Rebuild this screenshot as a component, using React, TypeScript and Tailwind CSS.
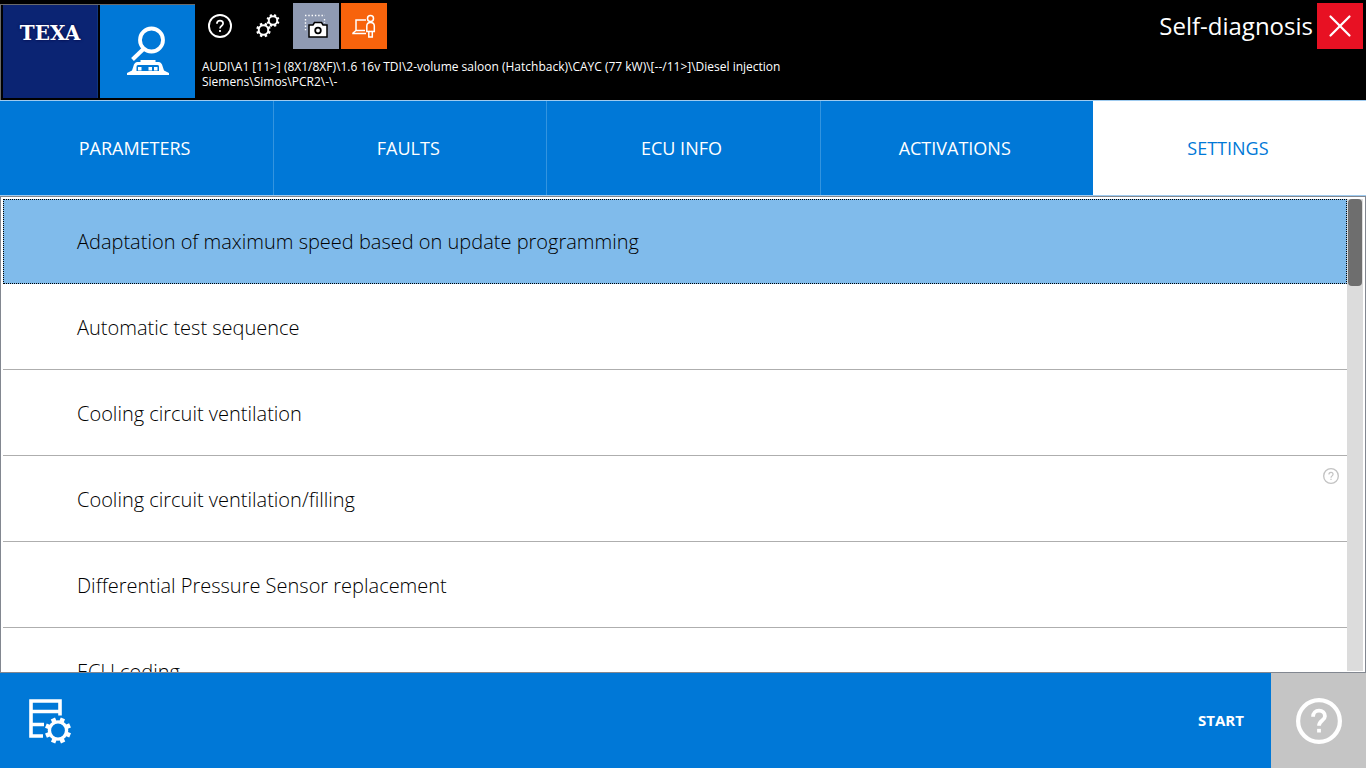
import { useState } from 'react';
import { X } from 'lucide-react';
import clsx from 'clsx';

const TABS = ['PARAMETERS', 'FAULTS', 'ECU INFO', 'ACTIVATIONS', 'SETTINGS'];

interface SettingItem {
  name: string;
  hasHelp?: boolean;
}

const SETTINGS: SettingItem[] = [
  { name: 'Adaptation of maximum speed based on update programming' },
  { name: 'Automatic test sequence' },
  { name: 'Cooling circuit ventilation' },
  { name: 'Cooling circuit ventilation/filling', hasHelp: true },
  { name: 'Differential Pressure Sensor replacement' },
  { name: 'ECU coding' },
];

const TEETH = [0, 45, 90, 135, 180, 225, 270, 315];

interface GearProps {
  cx: number;
  cy: number;
  r: number;
  stroke: number;
  tooth: number;
}

function Gear({ cx, cy, r, stroke, tooth }: GearProps) {
  return (
    <g>
      <circle cx={cx} cy={cy} r={r} fill="none" stroke="currentColor" strokeWidth={stroke} />
      {TEETH.map((angle) => (
        <rect
          key={angle}
          x={cx - tooth / 2}
          y={cy - r - stroke / 2 - tooth * 0.6}
          width={tooth}
          height={tooth}
          fill="currentColor"
          transform={`rotate(${angle + 22} ${cx} ${cy})`}
        />
      ))}
    </g>
  );
}

function HelpIcon({ className, stroke = 2 }: { className: string; stroke?: number }) {
  return (
    <svg viewBox="0 0 24 24" className={className} fill="none" stroke="currentColor" aria-hidden="true">
      <circle cx="12" cy="12" r={12 - stroke / 2} strokeWidth={stroke} />
      <path d="M8.9 9.8c0-2 1.3-3.2 3.1-3.2s3.1 1.2 3.1 2.9c0 2.3-3.1 2.3-3.1 5" strokeWidth={stroke * 0.9} />
      <path d="M12 16.1v1.900" strokeWidth={stroke * 0.9} />
    </svg>
  );
}

function GearsIcon() {
  return (
    <svg viewBox="0 0 26 26" className="size-[26px]" aria-hidden="true">
      <Gear cx={8.5} cy={17} r={4.8} stroke={2} tooth={2.5} />
      <Gear cx={18} cy={7.5} r={4.2} stroke={1.9} tooth={2.2} />
    </svg>
  );
}

function ScreenshotIcon() {
  return (
    <svg viewBox="0 0 46 46" className="size-[46px]" fill="none" aria-hidden="true">
      <path d="M12 12.5h20M12.5 16v13M31.5 16v4" stroke="#fff" strokeWidth="1.4" strokeDasharray="1.4 1.9" />
      <path d="M16 22h4l1.5-2.5h7L30 22h4v12H16z" fill="#fff" stroke="#000" strokeWidth="1.5" />
      <circle cx="25" cy="27.5" r="2.8" stroke="#000" strokeWidth="1.8" />
    </svg>
  );
}

function OperatorIcon() {
  return (
    <svg viewBox="0 0 46 46" className="size-[46px]" fill="none" stroke="#fff" strokeWidth="1.5" aria-hidden="true">
      <path d="M25 17H15v10.5h9M15 27.5L12 30v.6h13" />
      <circle cx="29.5" cy="15.5" r="3" />
      <path d="M29.5 19.5c-2.7 0-3.7 1.3-3.7 3.5v5.5h2V34h3.5v-5.5h2V23c0-2.2-1.1-3.5-3.8-3.5z" />
      <path d="M27.8 28.5h3.5" />
    </svg>
  );
}

function DiagnosisIcon() {
  return (
    <svg viewBox="0 0 95 93" className="h-[93px] w-full" aria-hidden="true">
      <circle cx="51.5" cy="35" r="11.5" fill="none" stroke="#fff" strokeWidth="3.8" />
      <path d="M44 43.5L32.5 54.5" stroke="#fff" strokeWidth="4" />
      <path
        d="M40.500 55h15v2h3.500c2 .5 3 2 3.500 4l1.500 4.500 5 2.500V70H27v-2l5-2.500 1.500-4.500c.5-2 1.500-3.500 3.500-4h3.500z"
        fill="#fff"
      />
      <path d="M38 60h19.5c1.2 0 1.5.8 1.5 2v4H36.5v-4c0-1.2.5-2 1.5-2z" fill="#0078d7" />
      <path d="M38 62h3.500v3.500H38zM48.500 62H52v3.500h-3.500zM54 62h3.500v3.500H54z" fill="#fff" />
    </svg>
  );
}

function EcuSettingsIcon() {
  return (
    <svg viewBox="0 0 46 48" className="h-12 w-[46px]" fill="none" aria-hidden="true">
      <path d="M33 18.5V4H4v35h12M4 14.5h29M4 27.5h13" stroke="#fff" strokeWidth="3.6" />
      <Gear cx={31} cy={33.5} r={8.6} stroke={3.4} tooth={4.6} />
    </svg>
  );
}

export default function App() {
  const [activeTab, setActiveTab] = useState('SETTINGS');
  const [selected, setSelected] = useState(0);

  return (
    <div className="flex h-screen flex-col overflow-hidden bg-white font-['Open_Sans','Noto_Sans',sans-serif] text-black">
      <header className="flex h-[100px] shrink-0 bg-black pt-1 text-white">
        <div className="flex gap-0.5 border-l border-t border-[#6a6a6a] pl-0.5">
          <div className="flex h-[93px] w-[95px] justify-center border-r border-[#10367f] bg-[#0b2473] pt-4 font-['DejaVu_Serif',serif] text-xl font-bold leading-6 text-shadow-[0_0_3px_#000040]">
            TEXA
          </div>
          <button type="button" aria-label="Vehicle diagnosis" className="h-[93px] w-[95px] bg-[#0078d7]">
            <DiagnosisIcon />
          </button>
        </div>

        <div className="-mt-px flex min-w-0 flex-1 flex-col">
          <div className="flex h-[46px] items-center">
            <div className="flex gap-0.5 pl-0.5">
              <button type="button" aria-label="Help" className="flex size-[46px] items-center justify-center">
                <HelpIcon className="size-6" stroke={1.9} />
              </button>
              <button type="button" aria-label="Options" className="flex size-[46px] items-center justify-center">
                <GearsIcon />
              </button>
              <button type="button" aria-label="Screenshot" className="size-[46px] bg-[#8f9ab2]">
                <ScreenshotIcon />
              </button>
              <button type="button" aria-label="Remote assistance" className="size-[46px] bg-[#f7630c]">
                <OperatorIcon />
              </button>
            </div>
            <h1 className="ml-auto pr-1 text-2xl">Self-diagnosis</h1>
            <button type="button" aria-label="Close" className="mr-[3px] flex size-[46px] items-center justify-center bg-[#e81123]">
              <X className="size-[38px]" strokeWidth={1.4} />
            </button>
          </div>
          <p className="max-w-[600px] pl-[7px] pt-2.5 text-xs leading-[15px]">
            AUDI\A1 [11&gt;] (8X1/8XF)\1.6 16v TDI\2-volume saloon (Hatchback)\CAYC (77 kW)\[--/11&gt;]\Diesel injection
            Siemens\Simos\PCR2\-\-
          </p>
        </div>
      </header>

      <nav className="grid h-24 shrink-0 grid-cols-5 border-y border-[#9fcbef]">
        {TABS.map((tab) => (
          <button
            key={tab}
            type="button"
            onClick={() => setActiveTab(tab)}
            className={clsx(
              'border-l pr-1 text-lg first:border-l-0',
              tab === activeTab ? 'border-white bg-white text-[#0078d7]' : 'border-[#3394df] bg-[#0078d7] text-white',
            )}
          >
            {tab}
          </button>
        ))}
      </nav>

      <main className="flex min-h-0 flex-1 border border-[#828790] p-0.5 pb-0">
        <ul className="min-w-0 flex-1 overflow-hidden">
          {SETTINGS.map((item, index) => (
            <li key={item.name} className="relative">
              <button
                type="button"
                onClick={() => setSelected(index)}
                className={clsx(
                  'block w-full text-left text-xl font-light',
                  index === selected
                    ? 'h-[85px] border border-dotted border-black bg-[#80bbeb] pl-[73px]'
                    : 'h-[86px] border-b border-[#aeaeae] pl-[74px] pt-0.5',
                )}
              >
                {item.name}
              </button>
              {item.hasHelp ? (
                <span className="absolute right-2 top-3 text-[#c3c3c3]">
                  <HelpIcon className="size-4" stroke={2} />
                </span>
              ) : null}
            </li>
          ))}
        </ul>
        <div className="mb-px w-4 bg-[#dcdcdc] px-px">
          <div className="h-[87px] rounded-sm bg-[#6e6e6e]" />
        </div>
      </main>

      <footer className="flex h-[95px] shrink-0 bg-[#0078d7] text-white">
        <button type="button" aria-label="ECU settings" className="flex w-[100px] items-center justify-center">
          <EcuSettingsIcon />
        </button>
        <button type="button" className="ml-auto w-[100px] text-[15px] font-bold">
          START
        </button>
        <button type="button" aria-label="Help" className="flex w-[95px] items-center justify-center bg-[#c5c5c5]">
          <HelpIcon className="size-[46px]" stroke={2.2} />
        </button>
      </footer>
    </div>
  );
}
